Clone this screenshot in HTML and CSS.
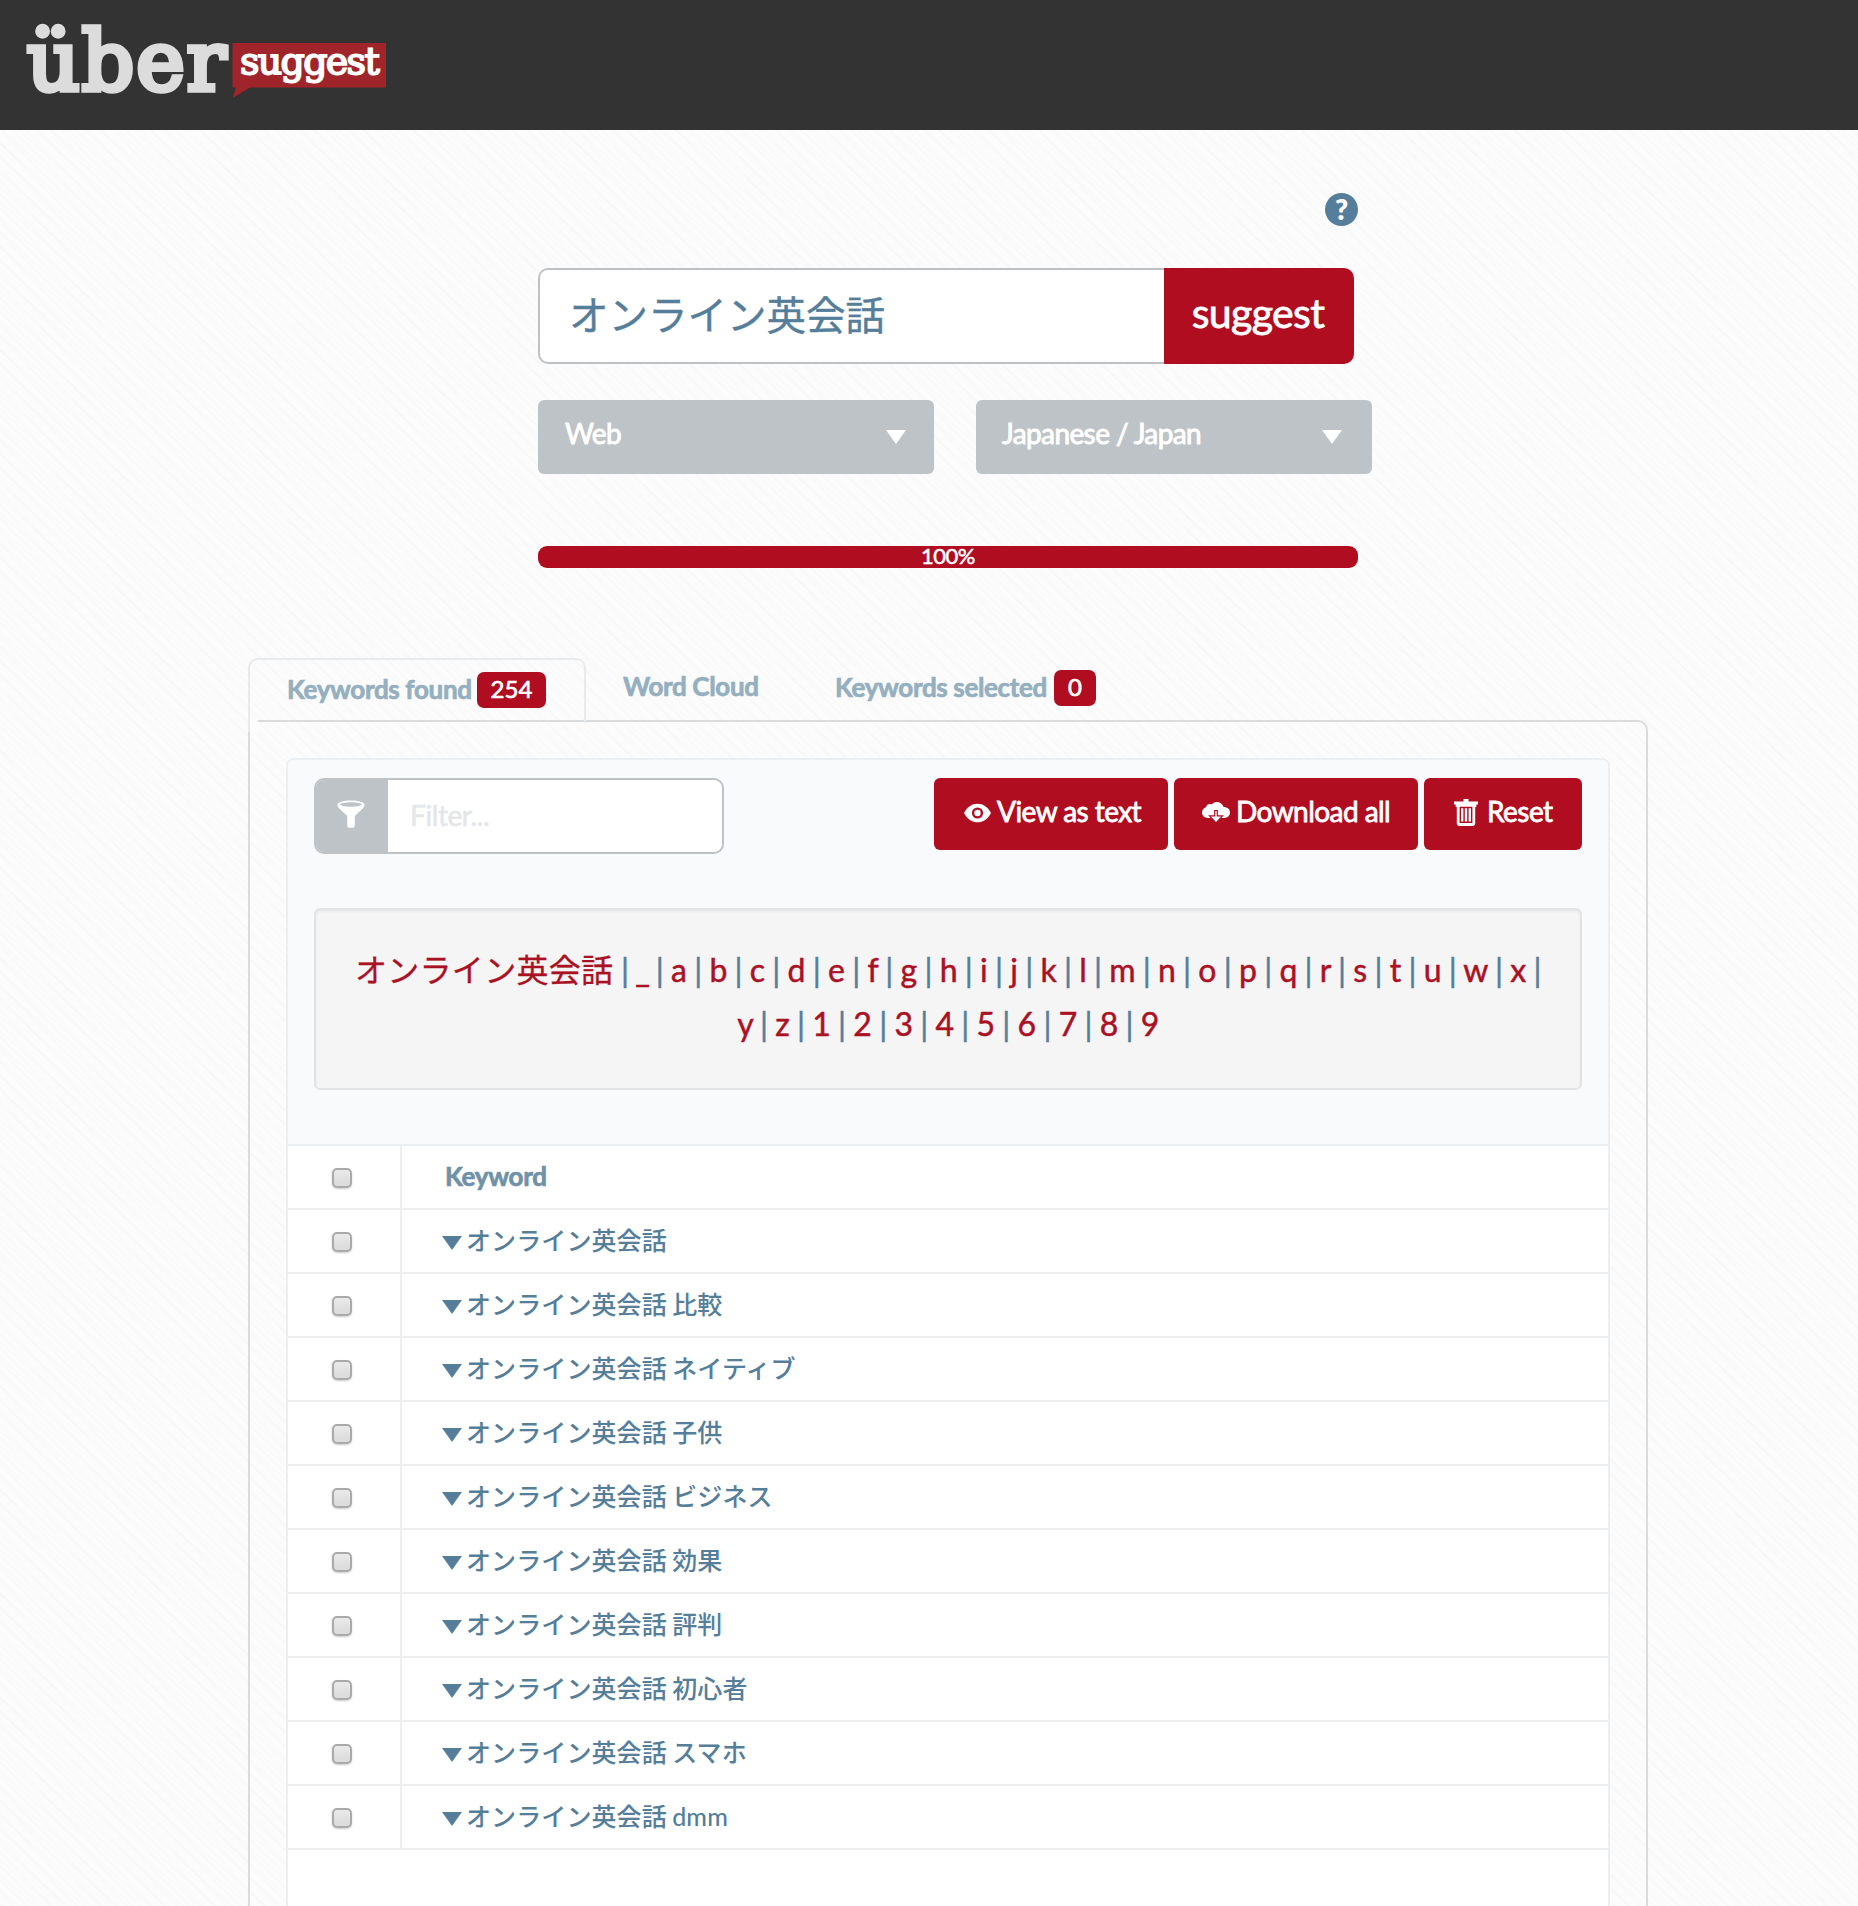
FILE: index.html
```html
<!DOCTYPE html>
<html lang="ja">
<head>
<meta charset="utf-8">
<title>Übersuggest</title>
<link rel="stylesheet" href="styles.css">
</head>
<body>
<header class="topbar">
  <svg class="logo" width="362" height="84" viewBox="0 0 362 84" role="img" aria-label="übersuggest">
    <text class="logo-uber" x="1" y="69">über</text>
    <path d="M206.500 22H360V66.500H224L206.500 77L210 66.500H206.500Z" fill="#a0252a"/>
    <text class="logo-suggest" x="214" y="53">suggest</text>
  </svg>
</header>

<main>
  <section class="search">
    <div class="help-row"><span class="help">?</span></div>
    <form class="search-row">
      <div class="search-input">オンライン英会話</div>
      <div class="search-button">suggest</div>
    </form>
    <div class="selects">
      <div class="select"><span>Web</span><svg width="20" height="14" viewBox="0 0 20 14"><path d="M0 0H20L10 14Z" fill="#fff"/></svg></div>
      <div class="select select-lang"><span>Japanese / Japan</span><svg width="20" height="14" viewBox="0 0 20 14"><path d="M0 0H20L10 14Z" fill="#fff"/></svg></div>
    </div>
    <div class="progress"><span>100%</span></div>
  </section>

  <section class="results">
    <nav class="tabs">
      <div class="tab tab-active"><span>Keywords found</span><b class="badge">254</b></div>
      <div class="tab tab-cloud"><span>Word Cloud</span></div>
      <div class="tab tab-selected"><span>Keywords selected</span><b class="badge">0</b></div>
    </nav>
    <div class="panel">
      <div class="box">
        <div class="tools">
          <div class="toolbar">
            <div class="filter">
              <div class="filter-icon">
                <svg width="28" height="28" viewBox="0 0 28 28"><path fill="#fff" fill-rule="evenodd" d="M14 .500C21.500.500 27.500 2.200 27.500 4.600C27.500 6 27.200 7 26 8.200L17.800 16V25.500C17.800 27 17 27.700 15.800 27.700H12.200C11 27.700 10.200 27 10.200 25.500V16L2 8.200C.800 7 .500 6 .500 4.600C.500 2.200 6.500.500 14 .500ZM14 2.300C7.800 2.300 3.200 3.400 3.200 4.500C3.200 5.700 7.800 6.800 14 6.800C20.200 6.800 24.800 5.700 24.800 4.500C24.800 3.400 20.200 2.300 14 2.300Z"/></svg>
              </div>
              <div class="filter-input">Filter...</div>
            </div>
            <div class="actions">
              <div class="btn btn-view">
                <svg width="27" height="20" viewBox="0 0 27 20"><path d="M0 10C3 4 8 .700 13.500.700S24 4 27 10C24 16 19 19.300 13.500 19.300S3 16 0 10Z" fill="#fff"/><circle cx="13.500" cy="10" r="4.400" fill="#fff" stroke="#b10d20" stroke-width="2.400"/></svg>
                <span>View as text</span>
              </div>
              <div class="btn btn-download">
                <svg width="28" height="22" viewBox="0 0 28 22"><path d="M6.200 16C2.700 16 0 13.600 0 10.500C0 8 1.600 6 4 5.300C4.400 3.200 6 2 8 2C8.700 2 9.300 2.100 9.800 2.400C11 .900 12.700 0 14.700 0C18 0 20.700 2 21.600 5C25.300 5 28 7.300 28 10.500C28 13.600 25.400 16 22 16Z" fill="#fff"/><path d="M12.700 8.500H15.300V13.800H20.500L14 21L7.500 13.800H12.700Z" fill="#fff" stroke="#b10d20" stroke-width="1.200"/></svg>
                <span>Download all</span>
              </div>
              <div class="btn btn-reset">
                <svg width="24" height="27" viewBox="0 0 24 27"><path fill="#fff" d="M9.500 0H14.500V2.500H24V5.500H22.300V8H21.200V24C21.200 26 20.300 27 18.500 27H5.500C3.700 27 2.800 26 2.800 24V8H1.700V5.500H0V2.500H9.500Z"/><path stroke="#b10d20" stroke-width="1.400" fill="none" d="M6.300 8.500V23.300H17.700V8.500ZM10.100 9V23.300M13.900 9V23.300"/></svg>
                <span>Reset</span>
              </div>
            </div>
          </div>
          <div class="letters"><a class="ja">オンライン英会話</a> | <a class="blank">_</a> | <a>a</a> | <a>b</a> | <a>c</a> | <a>d</a> | <a>e</a> | <a>f</a> | <a>g</a> | <a>h</a> | <a>i</a> | <a>j</a> | <a>k</a> | <a>l</a> | <a>m</a> | <a>n</a> | <a>o</a> | <a>p</a> | <a>q</a> | <a>r</a> | <a>s</a> | <a>t</a> | <a>u</a> | <a>w</a> | <a>x</a> |<br><a>y</a> | <a>z</a> | <a>1</a> | <a>2</a> | <a>3</a> | <a>4</a> | <a>5</a> | <a>6</a> | <a>7</a> | <a>8</a> | <a>9</a></div>
        </div>
        <div class="row"><div class="check"><i></i></div><div class="cell head">Keyword</div></div>
        <div class="row"><div class="check"><i></i></div><div class="cell"><u></u>オンライン英会話</div></div>
        <div class="row"><div class="check"><i></i></div><div class="cell"><u></u>オンライン英会話 比較</div></div>
        <div class="row"><div class="check"><i></i></div><div class="cell"><u></u>オンライン英会話 ネイティブ</div></div>
        <div class="row"><div class="check"><i></i></div><div class="cell"><u></u>オンライン英会話 子供</div></div>
        <div class="row"><div class="check"><i></i></div><div class="cell"><u></u>オンライン英会話 ビジネス</div></div>
        <div class="row"><div class="check"><i></i></div><div class="cell"><u></u>オンライン英会話 効果</div></div>
        <div class="row"><div class="check"><i></i></div><div class="cell"><u></u>オンライン英会話 評判</div></div>
        <div class="row"><div class="check"><i></i></div><div class="cell"><u></u>オンライン英会話 初心者</div></div>
        <div class="row"><div class="check"><i></i></div><div class="cell"><u></u>オンライン英会話 スマホ</div></div>
        <div class="row"><div class="check"><i></i></div><div class="cell"><u></u>オンライン英会話 dmm</div></div>
      </div>
    </div>
  </section>
</main>
</body>
</html>
```
FILE: styles.css
```css
* { box-sizing: border-box; }

body {
  margin: 0;
  height: 1906px;
  overflow: hidden;
  display: flex;
  flex-direction: column;
  font-family: "Lato", "Noto Sans CJK JP", sans-serif;
  color: #557e9a;
  background-color: #fcfcfc;
  background-image:
    repeating-linear-gradient(42deg, rgba(0,0,0,.008) 0 2px, transparent 3px 6px, rgba(0,0,0,.005) 7px 8px, transparent 9px 11px),
    repeating-linear-gradient(46deg, rgba(0,0,0,.008) 0 2px, transparent 3px 9px);
}

svg { display: block; flex: none; }

.topbar {
  height: 130px;
  flex: none;
  padding: 21px 0 0 26px;
  background: #333;
}
.logo { overflow: visible; }
.logo text { font-family: "DejaVu Serif", serif; }
.logo-uber { font-size: 82px; letter-spacing: 2px; fill: #dcdcdc; stroke: #dcdcdc; stroke-width: 5.5px; }
.logo-suggest { font-size: 38px; letter-spacing: -1.7px; fill: #fff; stroke: #fff; stroke-width: 1.8px; }

main { flex: 1; min-height: 0; display: flex; flex-direction: column; }

/* Search form */
.search { width: 834px; margin-left: 538px; height: 528px; flex: none; padding-top: 63px; }
.help-row { display: flex; justify-content: flex-end; padding-right: 14px; }
.help {
  width: 33px;
  height: 33px;
  border-radius: 50%;
  background: #557e9a;
  color: #fff;
  font-weight: 800;
  font-size: 28px;
  line-height: 32px;
  text-align: center;
}
.search-row { display: flex; width: 816px; height: 96px; margin-top: 42px; }
.search-input {
  flex: 1;
  padding-left: 29px;
  border: 2px solid #bfc2c5;
  border-right: 0;
  border-radius: 10px 0 0 10px;
  background: #fff;
  font-size: 39.5px;
  line-height: 90px;
  -webkit-text-stroke: .4px;
}
.search-button {
  width: 190px;
  border-radius: 0 10px 10px 0;
  background: #b10d20;
  color: #fff;
  font-size: 41px;
  letter-spacing: -.6px;
  line-height: 89px;
  text-align: center;
  padding-right: 2px;
  -webkit-text-stroke: .8px;
}
.selects { display: flex; gap: 42px; margin-top: 36px; }
.select {
  width: 396px;
  height: 74px;
  padding: 0 28px 8px 27px;
  display: flex;
  align-items: center;
  justify-content: space-between;
  border-radius: 6px;
  background: #bdc3c7;
  color: #fff;
  font-size: 28px;
  letter-spacing: -.6px;
  -webkit-text-stroke: .9px;
}
.select svg { margin-top: 8px; }
.select-lang { padding-left: 26px; padding-right: 30px; }
.progress {
  width: 820px;
  height: 22px;
  margin-top: 72px;
  border-radius: 9px;
  background: #b10d20;
  color: #fff;
  font-size: 22px;
  letter-spacing: -.5px;
  line-height: 20px;
  text-align: center;
  -webkit-text-stroke: .5px;
}

/* Tabs */
.results { width: 1400px; margin-left: 248px; flex: 1; min-height: 0; display: flex; flex-direction: column; }
.tabs { display: flex; height: 62px; flex: none; }
.tab {
  display: flex;
  align-items: center;
  height: 62px;
  font-size: 26px;
  font-weight: 700;
  letter-spacing: -.35px;
  color: #94afc0;
  -webkit-text-stroke: .7px;
}
.tab-active {
  position: relative;
  z-index: 1;
  width: 338px;
  height: 65px;
  padding: 0 0 6px 37px;
  border: 2px solid #e7ebee;
  border-bottom: 0;
  border-radius: 10px 10px 0 0;
}
.tab-active::after {
  content: "";
  position: absolute;
  left: -2px;
  top: 60px;
  width: 8px;
  height: 12px;
  border-left: 2px solid #e7ebee;
  background: #fdfdfd;
}
.tab-cloud { width: 250px; padding: 0 0 6px 37px; }
.tab-selected { padding-bottom: 4px; margin-left: -1px; }
.badge {
  height: 36px;
  margin: 2px 0 0 5px;
  padding: 0 14px;
  border-radius: 7px;
  background: #b10d20;
  color: #fff;
  font-size: 24px;
  font-weight: 400;
  letter-spacing: 0;
  line-height: 33px;
}
.tab-selected .badge { margin-left: 7px; }

/* Result panel */
.panel {
  flex: 1;
  min-height: 0;
  padding: 36px 36px 0 36px;
  border: 2px solid #dadbdc;
  border-bottom: 0;
  border-radius: 0 10px 0 0;
}
.box {
  height: 1200px;
  border: 2px solid #eceff2;
  border-radius: 8px 8px 0 0;
  background: #fff;
}
.tools {
  height: 386px;
  padding: 18px 26px 0;
  border-bottom: 2px solid #eceff1;
  border-radius: 6px 6px 0 0;
  background: #f9fafc;
}
.toolbar { display: flex; justify-content: space-between; height: 130px; }
.filter {
  display: flex;
  width: 410px;
  height: 76px;
  border: 2px solid #bdc3c7;
  border-radius: 10px;
  background: #fff;
  overflow: hidden;
}
.filter-icon { width: 72px; padding: 20px 0 0 21px; background: #bdc3c7; }
.filter-input {
  padding-left: 22px;
  font-size: 28px;
  letter-spacing: -.4px;
  line-height: 71px;
  color: #e4e6e9;
  -webkit-text-stroke: .5px;
}
.actions { display: flex; gap: 6px; }
.btn {
  display: flex;
  align-items: center;
  height: 72px;
  padding-bottom: 6px;
  border-radius: 6px;
  background: #b10d20;
  color: #fff;
  font-size: 28px;
  letter-spacing: -.55px;
  -webkit-text-stroke: .8px;
}
.btn svg { margin-top: 3px; }
.btn-view { width: 234px; padding-left: 30px; gap: 6px; }
.btn-download { width: 244px; padding-left: 28px; gap: 6px; }
.btn-reset { width: 158px; padding-left: 30px; gap: 9px; }
.letters {
  height: 182px;
  padding-top: 33px;
  border: 2px solid #e2e3e4;
  border-radius: 6px;
  background: #f5f5f5;
  box-shadow: inset 0 2px 3px rgba(0, 0, 0, .05);
  font-size: 32px;
  line-height: 54px;
  letter-spacing: -.48px;
  text-align: center;
  white-space: nowrap;
  -webkit-text-stroke: .5px;
}
.letters a { color: #ab1124; }
.letters .ja { letter-spacing: .3px; -webkit-text-stroke: .3px; }
.letters .blank { letter-spacing: -2px; margin-left: -1px; }

/* Keyword table */
.row { display: flex; height: 64px; border-bottom: 2px solid #eceeef; }
.check { width: 114px; border-right: 2px solid #eceeef; padding: 22px 0 0 44px; }
.check i {
  display: block;
  width: 20px;
  height: 20px;
  border: 2px solid #aaa;
  border-radius: 5px;
  background: linear-gradient(#eaeaea, #dadada);
  box-shadow: 0 1px 2px rgba(0, 0, 0, .2);
}
.cell {
  display: flex;
  align-items: center;
  padding: 0 0 5px 40px;
  font-size: 25px;
  font-weight: 500;
  letter-spacing: .1px;
  word-spacing: -1px;
  white-space: pre;
}
.head { padding: 0 0 3px 43px; font-size: 26px; font-weight: 700; letter-spacing: -.3px; color: #6f92a8; -webkit-text-stroke: .7px; }
.cell u {
  margin: 8px 4px 0 0;
  border: 10px solid transparent;
  border-top: 14px solid #557e9a;
  border-bottom: 0;
}
```
